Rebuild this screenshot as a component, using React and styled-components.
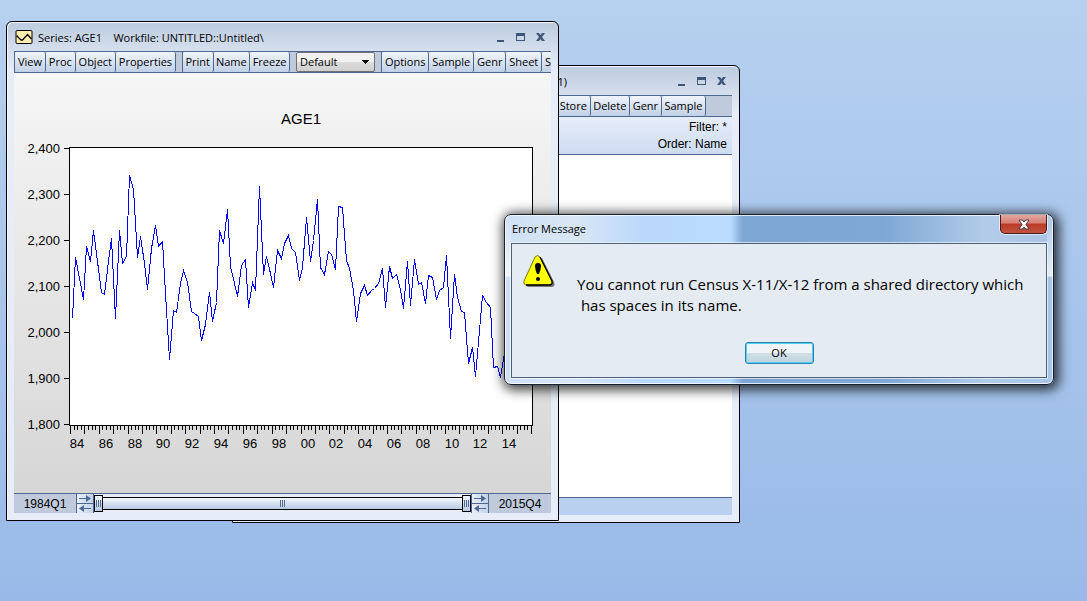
import { useState } from 'react';
import styled, { createGlobalStyle } from 'styled-components';

const years = ['84', '86', '88', '90', '92', '94', '96', '98', '00', '02', '04', '06', '08', '10', '12', '14'];
const scale = ['2,400', '2,300', '2,200', '2,100', '2,000', '1,900', '1,800'];

// quarterly points, measured down from the top of the plot in thirds of a pixel
const age1 = [
    533, 351, 415, 478, 318, 363, 270, 362, 456, 463, 363, 294, 533, 270, 370, 347,
    105, 148, 352, 289, 370, 448, 325, 256, 319, 304, 460, 656, 511, 516, 430, 391,
    425, 514, 520, 528, 599, 553, 457, 542, 487, 271, 310, 207, 378, 430, 469, 375,
    358, 500, 427, 451, 138, 403, 348, 400, 442, 331, 355, 310, 286, 325, 337, 421,
    382, 231, 364, 300, 177, 380, 403, 334, 342, 388, 198, 202, 361, 385, 450, 542,
    460, 436, 466, 450, 443, 430, 384, 500, 378, 415, 403, 448, 505, 363, 494, 357,
    432, 427, 488, 406, 412, 478, 450, 441, 345, 593, 402, 470, 513, 517, 668, 622,
    707, 570, 466, 486, 502, 680, 679, 710, 635
];

function WindowButtons() {
    return (
        <Controls>
            <button aria-label="Minimize">
                <svg width="9" height="9"><path d="M1 8H8" stroke="#3f567a" strokeWidth="2" /></svg>
            </button>
            <button aria-label="Maximize">
                <svg width="9" height="9"><path d="M0 0h9v8H0zM1 3v4h7V3z" fill="#3f567a" fillRule="evenodd" /></svg>
            </button>
            <button aria-label="Close">
                <svg width="9" height="9"><path d="M0 0h3l1.5 2L6 0h3L6 4l3 4H6L4.5 6 3 8H0l3-4z" fill="#3f567a" /></svg>
            </button>
        </Controls>
    );
}

function Chart() {
    const step = 461 / 128;
    const line = age1.map((v, i) => `${Math.round(56 + step * (i + 0.5)) + 0.5},${Math.round(67 + v / 3) + 0.5}`).join(' ');
    const ticks = Array.from({ length: 129 }, (_, i) => i);

    return (
        <Plot viewBox="0 0 537 420" role="img" aria-label="AGE1">
            <rect x="55.5" y="74.5" width="463" height="278" fill="#fff" stroke="#000" />
            <text x="287" y="51" fontSize="15">AGE1</text>
            {scale.map((label, i) => (
                <g key={label}>
                    <path d={`M50 ${75.5 + i * 46}H55`} stroke="#000" />
                    <text x="46" y={80 + i * 46} className="scale">{label}</text>
                </g>
            ))}
            {ticks.map(i => (
                <path key={i} d={`M${Math.round(56 + i * step) + 0.5} 353V${i % 4 === 0 ? 361 : 357}`} stroke="#000" />
            ))}
            {years.map((year, i) => (
                <text key={year} x={63 + Math.round(i * step * 8)} y="375">{year}</text>
            ))}
            <polyline points={line} fill="none" stroke="#00f" shapeRendering="crispEdges" />
        </Plot>
    );
}

function Stepper({ name }) {
    return (
        <Arrows>
            <button aria-label={`${name} forward`}>
                <svg width="12" height="7"><path d="M0 3.5H8" stroke="#4f6890" /><path d="M7 0l5 3.5L7 7z" fill="#4f6890" /></svg>
            </button>
            <button aria-label={`${name} back`}>
                <svg width="12" height="7"><path d="M4 3.5H12" stroke="#4f6890" /><path d="M5 0L0 3.5 5 7z" fill="#4f6890" /></svg>
            </button>
        </Arrows>
    );
}

function SampleRange() {
    const [start, setStart] = useState(0);
    const [end, setEnd] = useState(127);

    return (
        <RangeBar>
            <RangeLabel>1984Q1</RangeLabel>
            <Stepper name="Start" />
            <Range>
                <Track><i /><i /><i /></Track>
                <input type="range" min="0" max="127" value={start} aria-label="Sample start"
                    onChange={e => setStart(Math.min(Number(e.target.value), end))} />
                <input type="range" min="0" max="127" value={end} aria-label="Sample end"
                    onChange={e => setEnd(Math.max(Number(e.target.value), start))} />
            </Range>
            <Stepper name="End" />
            <RangeLabel>2015Q4</RangeLabel>
        </RangeBar>
    );
}

function WorkfileWindow() {
    return (
        <BackWindow>
            <TitleBar>
                <BackTitle>1)</BackTitle>
                <WindowButtons />
            </TitleBar>
            <Toolbar $end>
                <Group $width={150}>
                    <ToolButton>Store</ToolButton>
                    <ToolButton>Delete</ToolButton>
                    <ToolButton>Genr</ToolButton>
                    <ToolButton>Sample</ToolButton>
                </Group>
            </Toolbar>
            <Details>
                <p>Filter: *</p>
                <p>Order: Name</p>
            </Details>
            <Sheet />
            <StatusBar />
        </BackWindow>
    );
}

function SeriesWindow() {
    return (
        <FrontWindow>
            <TitleBar>
                <svg width="18" height="15">
                    <rect x="1" y="0.5" width="16" height="13" rx="1" fill="#ffeeb0" stroke="#000" />
                    <path d="M1.5 5.500l4.500 4.500h1.500l5-5.500 4 4.500" fill="none" stroke="#000" strokeWidth="1.3" />
                </svg>
                <Title>Series: AGE1{'    '}Workfile: UNTITLED::Untitled\</Title>
                <WindowButtons />
            </TitleBar>
            <Toolbar>
                <Group $width={162}>
                    <ToolButton>View</ToolButton>
                    <ToolButton>Proc</ToolButton>
                    <ToolButton>Object</ToolButton>
                    <ToolButton>Properties</ToolButton>
                </Group>
                <Group $width={108}>
                    <ToolButton>Print</ToolButton>
                    <ToolButton>Name</ToolButton>
                    <ToolButton>Freeze</ToolButton>
                </Group>
                <Select aria-label="Display" defaultValue="Default">
                    <option>Default</option>
                </Select>
                <Group $width={174}>
                    <ToolButton>Options</ToolButton>
                    <ToolButton>Sample</ToolButton>
                    <ToolButton>Genr</ToolButton>
                    <ToolButton>Sheet</ToolButton>
                    <ToolButton>S</ToolButton>
                </Group>
            </Toolbar>
            <ChartArea>
                <Chart />
            </ChartArea>
            <SampleRange />
        </FrontWindow>
    );
}

function ErrorDialog() {
    return (
        <Dialog role="alertdialog" aria-labelledby="error-title" aria-describedby="error-text">
            <DialogHeader>
                <h2 id="error-title">Error Message</h2>
                <CloseButton aria-label="Close">
                    <svg width="12" height="11">
                        <path d="M1 1h3.5L6 3l1.500-2H11L8 5.500l3 4.500H7.500L6 8l-1.500 2H1l3-4.500z" fill="#fff" stroke="#4b3a48" />
                    </svg>
                </CloseButton>
            </DialogHeader>
            <DialogBody>
                <Alert>
                    <svg width="33" height="33" viewBox="0 0 33 33">
                        <path d="M16 3Q19 2 20 5l11 22q2 5-3 5H6q-3 0-3-3z" fill="#777" />
                        <path d="M12 2Q14.500-1 17 2L29 26q1 4-3 4H4q-4 0-3-4z" fill="#ff0" stroke="#77771a" />
                        <path d="M17 2L29 26q1 4-3 4H3" fill="none" stroke="#000" strokeWidth="1.3" />
                        <path d="M12 11q0-3 3-3t3 3q0 3-2 8h-2q-2-5-2-8z" fill="#000" />
                        <circle cx="15" cy="24" r="2" fill="#000" />
                    </svg>
                    <p id="error-text">{'You cannot run Census X-11/X-12 from a shared directory which\n has spaces in its name.'}</p>
                </Alert>
                <OkButton>OK</OkButton>
            </DialogBody>
        </Dialog>
    );
}

export default function App() {
    return (
        <Desktop>
            <GlobalStyle />
            <WorkfileWindow />
            <SeriesWindow />
            <ErrorDialog />
        </Desktop>
    );
}

// styledComponents
const GlobalStyle = createGlobalStyle`
    * {
        box-sizing: border-box;
    }
    body {
        margin: 0;
        font-family: 'Open Sans', 'Noto Sans', sans-serif;
        font-size: 11px;
        color: #000;
    }
    button, select, input {
        margin: 0;
        padding: 0;
        font: inherit;
        color: inherit;
    }
    p, h2 {
        margin: 0;
    }
    svg {
        display: block;
    }
`;

const Desktop = styled.main`
    position: relative;
    height: 100vh;
    overflow: hidden;
    background: linear-gradient(#b6d0ef, #99bae8);
`;

const Window = styled.section`
    position: absolute;
    display: flex;
    flex-direction: column;
    padding: 0 7px 7px;
    border: 1px solid #000;
    border-radius: 6px 6px 0 0;
    background: linear-gradient(#bccbdf, #e6edf9 48px);
    box-shadow: inset 1px 1px 0 #f4f8fd;
`;

const FrontWindow = styled(Window)`
    left: 6px;
    top: 21px;
    width: 553px;
    height: 500px;
`;

const BackWindow = styled(Window)`
    left: 232px;
    top: 65px;
    width: 508px;
    height: 458px;
`;

const TitleBar = styled.header`
    display: flex;
    align-items: center;
    gap: 5px;
    flex: none;
    height: 29px;
    padding: 2px 6px 0 1px;
`;

const Title = styled.span`
    flex: 1;
    white-space: pre;
`;

const BackTitle = styled(Title)`
    text-align: right;
    padding-right: 105px;
`;

const Controls = styled.div`
    display: flex;
    gap: 11px;
    button {
        border: none;
        background: none;
    }
`;

const Toolbar = styled.div`
    display: flex;
    flex: none;
    gap: 6px;
    height: 22px;
    justify-content: ${props => (props.$end ? 'flex-end' : 'flex-start')};
    padding-right: ${props => (props.$end ? '26px' : '0')};
    border-top: 1px solid #4f6890;
    border-bottom: 1px solid #4f6890;
    background: #bfcbdd;
    overflow: hidden;
`;

const Group = styled.div`
    display: flex;
    flex: none;
    width: ${props => props.$width}px;
    border-left: 1px solid #4f6890;
`;

const ToolButton = styled.button`
    flex: 1 1 auto;
    padding: 0 2px 2px;
    border: none;
    border-right: 1px solid #4f6890;
    border-radius: 2px;
    background: linear-gradient(#f1f5fb, #c0d0e7);
`;

const Select = styled.select`
    flex: none;
    width: 79px;
    padding: 0 0 1px 3px;
    border: 1px solid #707070;
    border-radius: 2px;
    appearance: none;
    background:
        conic-gradient(from -45deg at 50% 4px, #000 90deg, transparent 0) right 4px center / 9px 4px no-repeat,
        linear-gradient(#f2f2f2 50%, #dcdcdc 50%, #d0d0d0);
`;

const ChartArea = styled.div`
    flex: 1;
    min-height: 0;
    background: linear-gradient(#f6f6f6, #d6d6d6);
`;

const Plot = styled.svg`
    width: 100%;
    height: 100%;
    font-family: 'Liberation Sans', Arial, sans-serif;
    font-size: 13px;
    text-anchor: middle;
    .scale {
        text-anchor: end;
    }
`;

const RangeBar = styled.div`
    display: flex;
    flex: none;
    height: 20px;
    border-top: 1px solid #4f6890;
    font-family: 'Liberation Sans', Arial, sans-serif;
    font-size: 12px;
`;

const RangeLabel = styled.span`
    display: flex;
    align-items: center;
    justify-content: center;
    width: 62px;
    background: #bfcbdd;
`;

const Arrows = styled.div`
    display: flex;
    flex-direction: column;
    width: 18px;
    border-left: 1px solid #4f6890;
    border-right: 1px solid #4f6890;
    button {
        display: flex;
        flex: 1;
        align-items: center;
        justify-content: center;
        border: none;
        background: linear-gradient(90deg, #e9eff9, #c3d2e8);
    }
    button + button {
        border-top: 1px solid #4f6890;
    }
`;

const Range = styled.div`
    display: grid;
    flex: 1;
    align-items: center;
    > * {
        grid-area: 1 / 1;
    }
    input {
        width: 100%;
        height: 17px;
        appearance: none;
        background: none;
        pointer-events: none;
    }
    input::-webkit-slider-thumb {
        appearance: none;
        width: 9px;
        height: 17px;
        border: 1px solid #000;
        background:
            repeating-linear-gradient(90deg, #4f6890 0 1px, transparent 1px 2px) center / 5px 7px no-repeat,
            linear-gradient(#f1f5fb, #b7c9e2);
        pointer-events: auto;
    }
`;

const Track = styled.div`
    display: flex;
    align-items: center;
    justify-content: center;
    gap: 1px;
    height: 13px;
    border: 1px solid #000;
    background: linear-gradient(#f4f8fd, #b7c9e2);
    i {
        width: 1px;
        height: 7px;
        background: #4f6890;
    }
`;

const Details = styled.div`
    flex: none;
    height: 38px;
    padding: 2px 5px 0 0;
    border-bottom: 1px solid #4f6890;
    background: linear-gradient(#e6edf9, #cedcf1);
    font-family: 'Liberation Sans', Arial, sans-serif;
    font-size: 12px;
    line-height: 17px;
    text-align: right;
`;

const Sheet = styled.div`
    flex: 1;
    background: #fff;
`;

const StatusBar = styled.footer`
    flex: none;
    height: 18px;
    border-top: 1px solid #4f6890;
    background: #bad0ef;
`;

const Dialog = styled.section`
    position: absolute;
    left: 504px;
    top: 214px;
    width: 550px;
    display: flex;
    flex-direction: column;
    padding: 0 6px 6px;
    border: 1px solid #17202c;
    border-radius: 7px;
    background:
        linear-gradient(rgba(255, 255, 255, 0) 0, rgba(255, 255, 255, 0.7) 61px, rgba(255, 255, 255, 0) 62px) left / 6px 100% no-repeat,
        linear-gradient(rgba(255, 255, 255, 0) 0, rgba(255, 255, 255, 0.7) 61px, rgba(255, 255, 255, 0) 62px) right / 6px 100% no-repeat,
        linear-gradient(90deg, #cfe0f5 0, #d9e6f5 70px, #b9d8fa 140px, #bbdcff 225px, #7ea6d4 238px, #7fa8d6 380px, #b2cce9 480px, #a9c5e6);
    box-shadow: inset 0 0 0 1px rgba(255, 255, 255, 0.75), 2px 2px 12px 3px rgba(0, 0, 0, 0.75);
`;

const DialogHeader = styled.header`
    display: flex;
    justify-content: space-between;
    height: 28px;
    h2 {
        padding-left: 1px;
        font-size: 11px;
        font-weight: 400;
        line-height: 28px;
    }
`;

const CloseButton = styled.button`
    display: flex;
    align-items: center;
    justify-content: center;
    width: 47px;
    height: 19px;
    border: 1px solid #4a1a1a;
    border-top: none;
    border-radius: 0 0 5px 5px;
    background: linear-gradient(#e2a79f, #d58074 45%, #b93a26 50%, #c2543f);
    box-shadow: 0 0 0 1px rgba(255, 255, 255, 0.6);
`;

const DialogBody = styled.div`
    display: flex;
    flex-direction: column;
    align-items: center;
    gap: 26px;
    padding: 11px 11px 13px;
    border: 1px solid #4d5e77;
    background: #e4ebf3;
    box-shadow: 0 0 0 1px rgba(255, 255, 255, 0.6);
`;

const Alert = styled.div`
    display: flex;
    align-self: stretch;
    gap: 21px;
    p {
        padding-top: 19px;
        font-size: 15px;
        line-height: 21px;
        white-space: pre;
    }
`;

const OkButton = styled.button`
    width: 69px;
    height: 22px;
    padding-bottom: 2px;
    border: 1px solid #2f7fae;
    border-radius: 3px;
    background: linear-gradient(#eef4f7 48%, #cfdfe6 52%, #bfd4dd);
    box-shadow: inset 0 0 0 1px #4fd0f5;
`;
